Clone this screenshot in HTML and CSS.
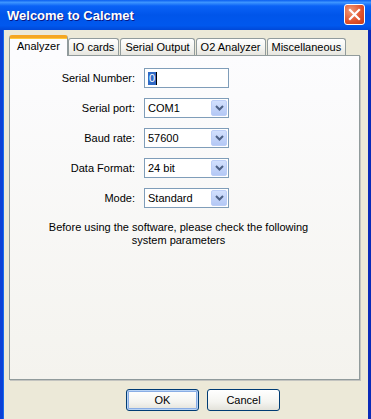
FILE: index.html
```html
<!DOCTYPE html>
<html lang="en">
<head>
  <meta charset="UTF-8">
  <title>Welcome to Calcmet</title>
  <link rel="stylesheet" href="styles.css">
</head>
<body>
  <div class="window">
    <div class="titlebar">
      <span class="title">Welcome to Calcmet</span>
      <button class="close" aria-label="Close">
        <svg width="13" height="13" viewBox="0 0 13 13">
          <path d="M2 2 L11 11 M11 2 L2 11" stroke="#fff" stroke-width="2.2" stroke-linecap="square"/>
        </svg>
      </button>
    </div>
    <div class="client">
      <div class="tabs">
        <div class="tab active">Analyzer</div>
        <div class="tab">IO cards</div>
        <div class="tab">Serial Output</div>
        <div class="tab">O2 Analyzer</div>
        <div class="tab">Miscellaneous</div>
      </div>
      <div class="panel">
        <div class="form">
          <label>Serial Number:</label>
          <div class="textbox"><span class="sel">0</span><span class="caret"></span></div>

          <label>Serial port:</label>
          <div class="combo"><span>COM1</span><span class="drop"><svg width="9" height="6" viewBox="0 0 9 6"><path d="M1 1 L4.5 4.5 L8 1" fill="none" stroke="#4d6185" stroke-width="2"/></svg></span></div>

          <label>Baud rate:</label>
          <div class="combo"><span>57600</span><span class="drop"><svg width="9" height="6" viewBox="0 0 9 6"><path d="M1 1 L4.5 4.5 L8 1" fill="none" stroke="#4d6185" stroke-width="2"/></svg></span></div>

          <label>Data Format:</label>
          <div class="combo"><span>24 bit</span><span class="drop"><svg width="9" height="6" viewBox="0 0 9 6"><path d="M1 1 L4.5 4.5 L8 1" fill="none" stroke="#4d6185" stroke-width="2"/></svg></span></div>

          <label>Mode:</label>
          <div class="combo"><span>Standard</span><span class="drop"><svg width="9" height="6" viewBox="0 0 9 6"><path d="M1 1 L4.5 4.5 L8 1" fill="none" stroke="#4d6185" stroke-width="2"/></svg></span></div>
        </div>
        <p class="note">Before using the software, please check the following<br>system parameters</p>
      </div>
      <div class="buttons">
        <button class="btn default">OK</button>
        <button class="btn">Cancel</button>
      </div>
    </div>
  </div>
</body>
</html>
```

FILE: styles.css
```css
body {
  margin: 0;
  font-family: "Liberation Sans", Arial, sans-serif;
  font-size: 11px;
  color: #000;
  background: #ece9d8;
}
.window {
  width: 371px;
  height: 419px;
  display: flex;
  flex-direction: column;
  overflow: hidden;
}
.titlebar {
  height: 30px;
  flex: none;
  display: flex;
  align-items: center;
  justify-content: space-between;
  padding: 0 6px 0 7px;
  box-sizing: border-box;
  background: linear-gradient(#0a5ef0 0%, #3d95ff 8%, #0a62f6 20%, #0055ea 50%, #0058ee 85%, #0048d8 100%);
}
.title {
  color: #fff;
  font-weight: bold;
  font-size: 13px;
  text-shadow: 1px 1px #0a1883;
  margin-top: 1px;
}
.close {
  width: 21px;
  height: 21px;
  padding: 0;
  border: 1px solid #fff;
  border-radius: 3px;
  background: radial-gradient(circle at 30% 30%, #f09a78, #e0502a 60%, #c43b17);
  display: flex;
  align-items: center;
  justify-content: center;
  margin-top: -2px;
}
.client {
  flex: 1;
  display: flex;
  flex-direction: column;
  padding: 5px 8px 0 6px;
  border-left: 3px solid #0b40d6;
  border-right: 3px solid #0a2ab8;
  box-shadow: inset 1px 0 #166aee;
}
.tabs {
  display: flex;
  align-items: flex-end;
  height: 20px;
  position: relative;
  z-index: 1;
}
.tab {
  height: 17px;
  line-height: 17px;
  box-sizing: border-box;
  padding: 0 4px;
  margin-right: 1px;
  border: 1px solid #919b9c;
  border-bottom: none;
  border-radius: 3px 3px 0 0;
  background: linear-gradient(#fff, #f3f3ef 60%, #e6e5df);
  white-space: nowrap;
}
.tab.active {
  height: 21px;
  margin-right: 0;
  margin-bottom: -1px;
  padding: 0 7px;
  background: #fcfcfe;
  border-top: 3px solid #f5a623;
  box-shadow: inset 0 1px #ffc83c;
  line-height: 16px;
}
.panel {
  height: 325px;
  box-sizing: border-box;
  border: 1px solid #919b9c;
  box-shadow: 1px 1px #c3c4c0;
  background: linear-gradient(#fcfcfe, #f4f3ee);
  padding-top: 12px;
}
.form {
  display: grid;
  grid-template-columns: 125px 85px;
  column-gap: 9px;
  row-gap: 10px;
  align-items: center;
}
.form label {
  text-align: right;
}
.textbox, .combo {
  height: 20px;
  box-sizing: border-box;
  border: 1px solid #7f9db9;
  background: #fff;
  display: flex;
  align-items: center;
  padding-left: 3px;
}
.sel {
  background: #316ac5;
  color: #fff;
  line-height: 13px;
  padding: 0 1px;
}
.caret {
  width: 1px;
  height: 13px;
  background: #000;
}
.combo {
  justify-content: space-between;
  padding-right: 1px;
}
.drop {
  width: 16px;
  height: 16px;
  box-sizing: border-box;
  border: 1px solid #bccef7;
  border-radius: 2px;
  background: linear-gradient(#d2e0fd, #b4c8f5);
  display: flex;
  align-items: center;
  justify-content: center;
}
.note {
  margin: 13px 20px 0 8px;
  text-align: center;
  line-height: 13px;
}
.buttons {
  display: flex;
  gap: 8px;
  margin-top: 9px;
  padding-left: 117px;
}
.btn {
  width: 73px;
  height: 22px;
  font-family: inherit;
  font-size: 11px;
  border: 1px solid #003c74;
  border-radius: 3px;
  background: linear-gradient(#fff, #f4f4f0 60%, #e3e2da);
}
.btn.default {
  box-shadow: inset 0 0 0 1px #b8d3f5, inset 0 0 0 2px #89ade4;
}
```
